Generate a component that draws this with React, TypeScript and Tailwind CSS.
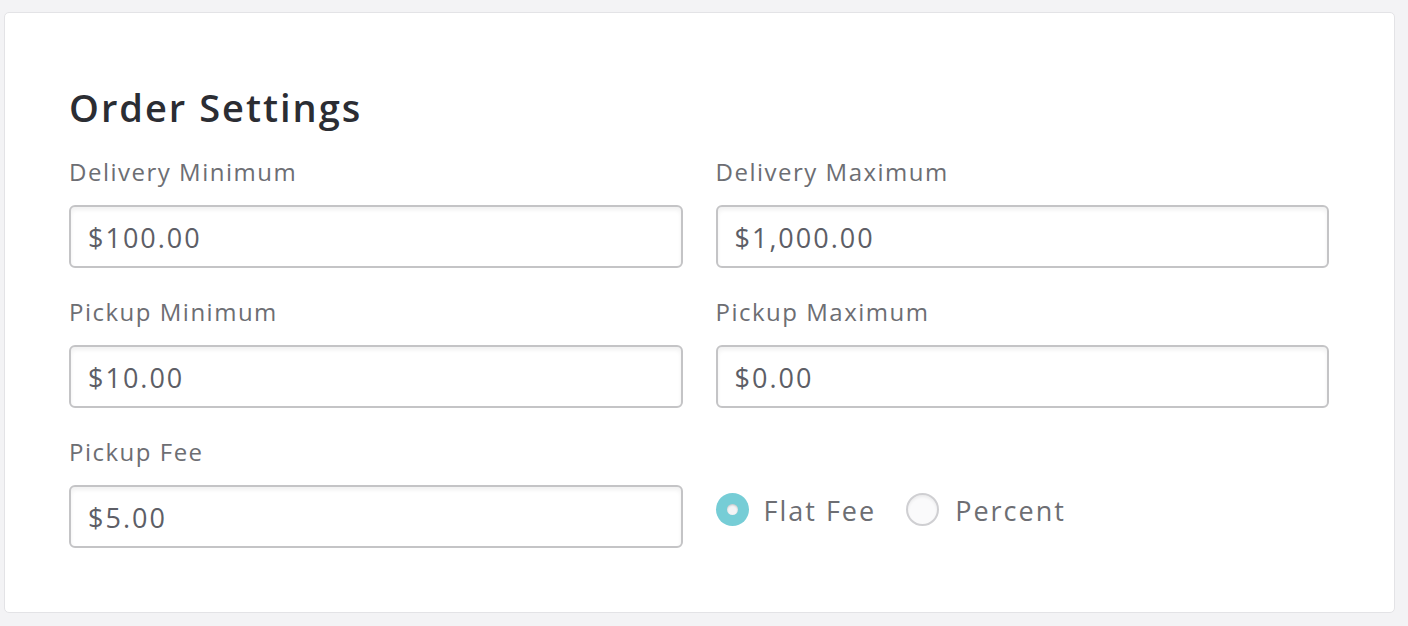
import React from "react";

const font = { fontFamily: "'Open Sans', Lato, sans-serif" };

function Field({ label, value }: { label: string; value: string }) {
  return (
    <div className="flex flex-col">
      <label className="text-[24px] leading-[30px] tracking-[1.5px] text-[#6d6e73] h-[48px]">{label}</label>
      <div className="h-[63px] rounded-[6px] border-2 border-[#c4c4c6] bg-white shadow-[inset_0_3px_4px_rgba(0,0,0,0.06)] flex items-center px-[17px]">
        <span className="text-[27px] tracking-[2px] text-[#5d5e66] pt-[3px]">{value}</span>
      </div>
    </div>
  );
}

export default function App() {
  return (
    <div className="w-[1408px] h-[626px] bg-[#f3f3f5] pt-[12px] pl-[4px] pr-[13px]" style={font}>
      <div className="h-[601px] bg-white border border-[#e3e3e6] rounded-[5px] pl-[64px] pr-[65px] pt-[69px]">
        <h1 className="text-[38px] leading-[50px] tracking-[2px] font-semibold text-[#2b2d33] mb-[25px]">Order Settings</h1>
        <div className="grid grid-cols-2 gap-x-[33px] gap-y-[29px]">
          <Field label="Delivery Minimum" value="$100.00" />
          <Field label="Delivery Maximum" value="$1,000.00" />
          <Field label="Pickup Minimum" value="$10.00" />
          <Field label="Pickup Maximum" value="$0.00" />
          <Field label="Pickup Fee" value="$5.00" />
          <div className="flex items-end pb-[21px]">
            <div className="flex items-center h-[36px]">
              <div className="w-[33px] h-[33px] rounded-full bg-[#76cdd6] flex items-center justify-center">
                <div className="w-[11px] h-[11px] rounded-full bg-[#f4f4f6] shadow-[inset_0_1px_2px_rgba(0,0,0,0.2)]" />
              </div>
              <span className="ml-[15px] text-[27px] tracking-[2px] text-[#6d6e73] pt-[4px]">Flat Fee</span>
              <div className="ml-[30px] w-[33px] h-[33px] rounded-full border-2 border-[#cfcfd2] bg-[#fafafb] shadow-[inset_0_2px_3px_rgba(0,0,0,0.06)]" />
              <span className="ml-[16px] text-[27px] tracking-[2px] text-[#6d6e73] pt-[4px]">Percent</span>
            </div>
          </div>
        </div>
      </div>
    </div>
  );
}
